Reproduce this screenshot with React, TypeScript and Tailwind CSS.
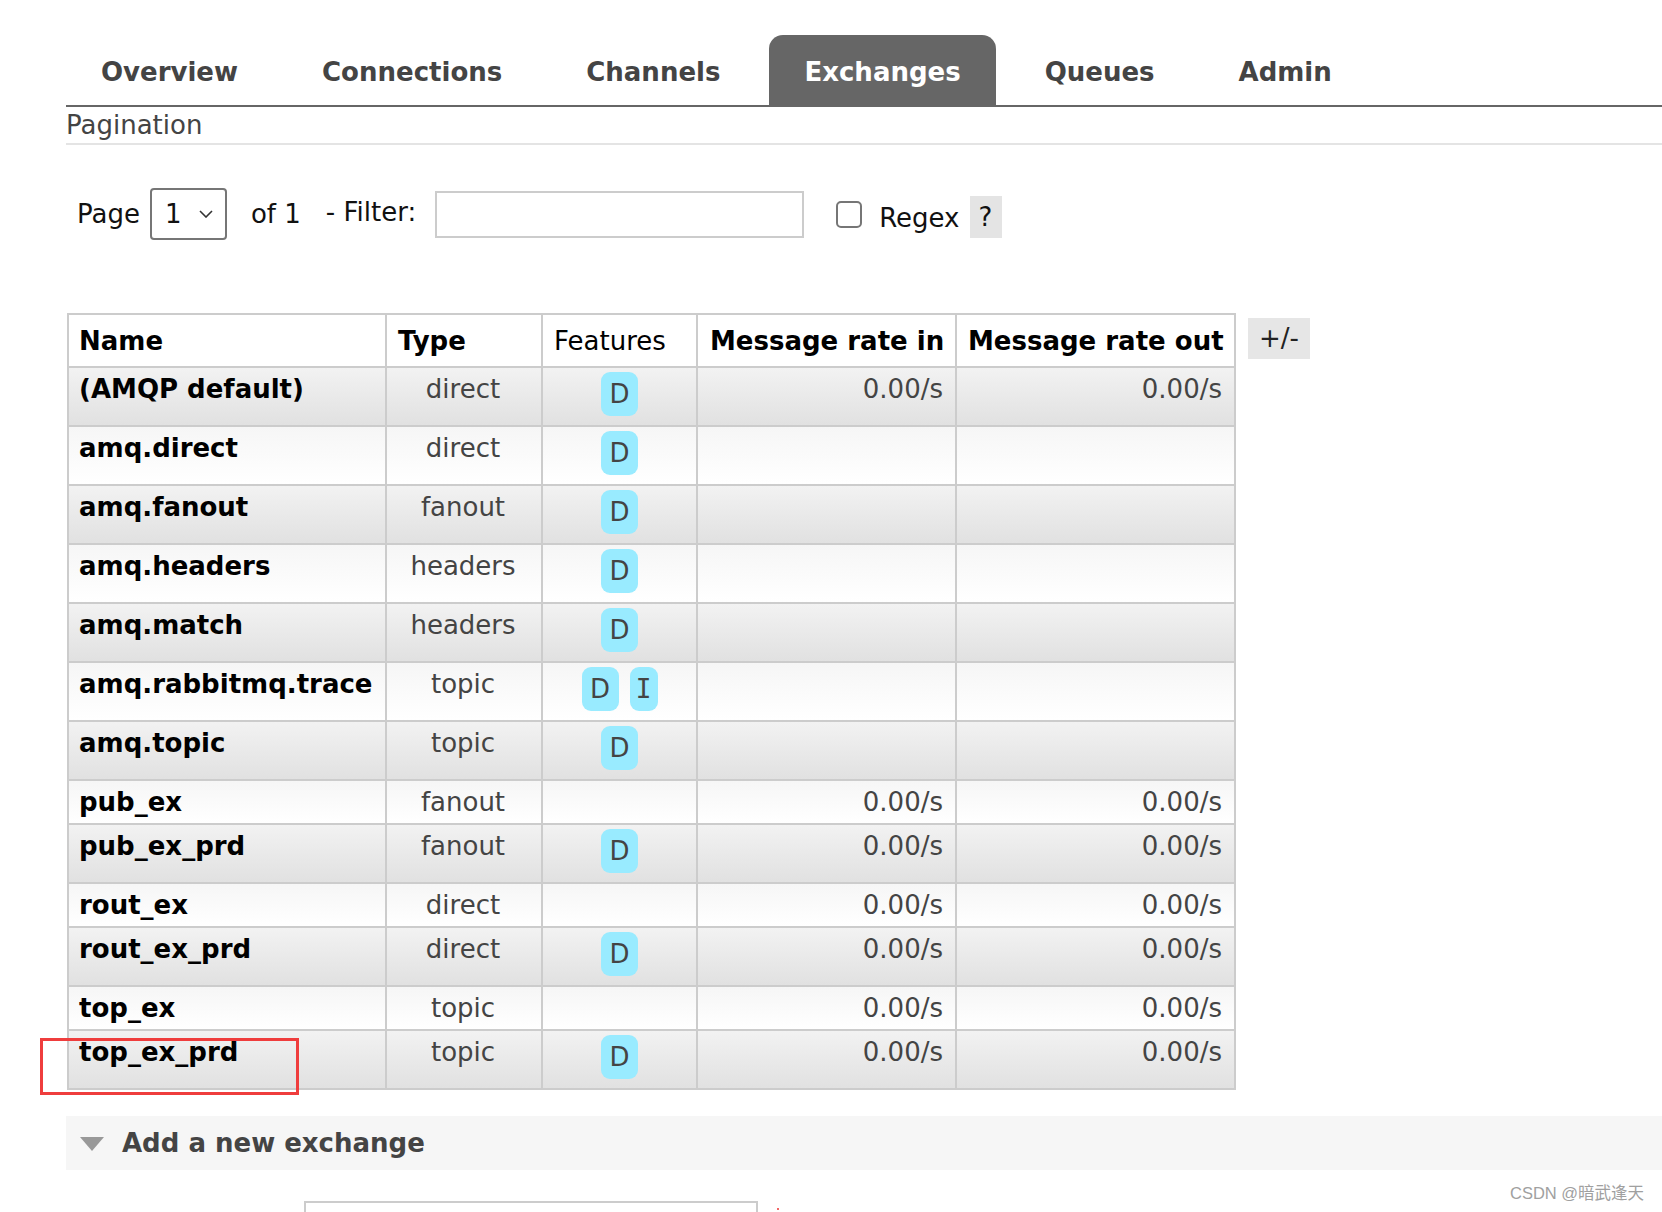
import React from 'react'

const tabs = ['Overview', 'Connections', 'Channels', 'Exchanges', 'Queues', 'Admin']

type Row = { name: string; type: string; features: string[]; rates: boolean }

const rows: Row[] = [
  { name: '(AMQP default)', type: 'direct', features: ['D'], rates: true },
  { name: 'amq.direct', type: 'direct', features: ['D'], rates: false },
  { name: 'amq.fanout', type: 'fanout', features: ['D'], rates: false },
  { name: 'amq.headers', type: 'headers', features: ['D'], rates: false },
  { name: 'amq.match', type: 'headers', features: ['D'], rates: false },
  { name: 'amq.rabbitmq.trace', type: 'topic', features: ['D', 'I'], rates: false },
  { name: 'amq.topic', type: 'topic', features: ['D'], rates: false },
  { name: 'pub_ex', type: 'fanout', features: [], rates: true },
  { name: 'pub_ex_prd', type: 'fanout', features: ['D'], rates: true },
  { name: 'rout_ex', type: 'direct', features: [], rates: true },
  { name: 'rout_ex_prd', type: 'direct', features: ['D'], rates: true },
  { name: 'top_ex', type: 'topic', features: [], rates: true },
  { name: 'top_ex_prd', type: 'topic', features: ['D'], rates: true },
]

const cell = 'border-2 border-[#cccccc] pt-[6px] pb-[6px] leading-[30px] align-top'
const th = 'border-2 border-[#cccccc] pt-[11px] pb-[10px] leading-[30px] text-left align-top text-black'

function Badge({ label }: { label: string }) {
  return (
    <span
      className={`inline-flex h-[44px] items-center justify-center rounded-[9px] bg-[#99ebff] text-[#444] ${
        label === 'I' ? "w-[28px] font-['DejaVu_Sans_Mono',monospace]" : 'w-[37px]'
      }`}
    >
      {label}
    </span>
  )
}

export default function App() {
  return (
    <div className="relative min-h-[1212px] w-full overflow-hidden bg-white font-['DejaVu_Sans',sans-serif] text-[26px] text-[#222]">
      {/* tabs */}
      <div className="ml-[66px] flex gap-[14px] border-b-2 border-[#666] pt-[35px]">
        {tabs.map((t) => (
          <div
            key={t}
            className={`flex h-[70px] items-center rounded-t-[14px] px-[35px] pt-[4px] font-bold ${
              t === 'Exchanges' ? 'bg-[#666] text-white' : 'text-[#444]'
            }`}
          >
            {t}
          </div>
        ))}
      </div>

      <div className="ml-[66px] border-b-2 border-[#e4e4e4] pt-[1px] leading-[35px] text-[#444]">Pagination</div>

      {/* pagination row */}
      <div className="ml-[77px] mt-[43px] flex items-center leading-[30px] text-[#111]">
        <span>Page</span>
        <div className="ml-[10px] flex h-[52px] w-[77px] items-center justify-between rounded-[4px] border-2 border-[#767676] pl-[13px] pr-[12px]">
          <span>1</span>
          <svg width="14" height="8" viewBox="0 0 14 8">
            <polyline points="1,1 7,7 13,1" fill="none" stroke="#333" strokeWidth="1.6" />
          </svg>
        </div>
        <span className="ml-[24px]">of 1</span>
        <span className="ml-[25px] -mt-[4px]">- Filter:</span>
        <div className="ml-[19px] h-[47px] w-[369px] border-2 border-[#cccccc]" />
        <div className="ml-[32px] h-[27px] w-[26px] rounded-[5px] border-2 border-[#767676]" />
        <span className="ml-[17px] mt-[8px]">Regex</span>
        <span className="ml-[10px] mt-[6px] flex h-[42px] w-[32px] items-center justify-center bg-[#e4e4e4]">?</span>
      </div>

      {/* table */}
      <div className="ml-[67px] mt-[73px] flex items-start gap-[12px]">
        <table className="w-[1167px] table-fixed border-collapse border-2 border-[#cccccc]">
          <colgroup>
            <col className="w-[318px]" />
            <col className="w-[156px]" />
            <col className="w-[155px]" />
            <col className="w-[259px]" />
            <col className="w-[279px]" />
          </colgroup>
          <thead>
            <tr className="bg-white">
              <th className={`${th} pl-[10px] font-bold`}>Name</th>
              <th className={`${th} pl-[11px] font-bold`}>Type</th>
              <th className={`${th} pl-[11px] font-normal`}>Features</th>
              <th className={`${th} pl-[12px] font-bold`}>Message rate in</th>
              <th className={`${th} pl-[11px] font-bold`}>Message rate out</th>
            </tr>
          </thead>
          <tbody>
            {rows.map((r, i) => {
              const bg =
                i % 2 === 0
                  ? 'bg-gradient-to-b from-[#f2f2f2] to-[#e1e1e1]'
                  : 'bg-gradient-to-b from-[#f6f6f6] to-[#ffffff]'
              return (
                <tr key={r.name}>
                  <td className={`${cell} ${bg} pl-[10px] font-bold text-black`}>{r.name}</td>
                  <td className={`${cell} ${bg} pr-[2px] text-center text-[#444]`}>{r.type}</td>
                  <td className={`border-2 border-[#cccccc] align-top ${bg} ${r.features.length ? 'pt-[4px] pb-[9px]' : ''}`}>
                    {r.features.length > 0 && (
                      <div className="flex justify-center gap-[11px] leading-[30px]">
                        {r.features.map((f) => (
                          <Badge key={f} label={f} />
                        ))}
                      </div>
                    )}
                  </td>
                  <td className={`${cell} ${bg} pr-[12px] text-right text-[#444]`}>{r.rates ? '0.00/s' : ''}</td>
                  <td className={`${cell} ${bg} pr-[12px] text-right text-[#444]`}>{r.rates ? '0.00/s' : ''}</td>
                </tr>
              )
            })}
          </tbody>
        </table>
        <button className="mt-[5px] flex h-[41px] w-[62px] items-center justify-center bg-[#e6e6e6] text-[#222]">
          +/-
        </button>
      </div>

      {/* add a new exchange */}
      <div className="ml-[66px] mt-[26px] flex h-[54px] items-center bg-[#f6f6f6] pl-[14px]">
        <svg width="24" height="14" viewBox="0 0 24 14" className="mt-[2px]">
          <polygon points="0,0 24,0 12,14" fill="#999" />
        </svg>
        <span className="ml-[18px] font-bold text-[#444]">Add a new exchange</span>
      </div>
      <div className="ml-[304px] mt-[31px] flex items-start">
        <div className="h-[50px] w-[454px] border-2 border-[#cccccc]" />
        <div className="ml-[19px] mt-[7px] h-[2px] w-[2px] rounded-full bg-[#e33]" />
      </div>

      {/* annotation */}
      <div className="absolute left-[40px] top-[1038px] h-[57px] w-[259px] border-[3px] border-[#ef3d3d]" />

      <div className="absolute left-[1510px] top-[1182px] font-['Liberation_Sans','Noto_Sans_CJK_SC',sans-serif] text-[16.5px] leading-[22px] text-[#a0a0a0]">
        CSDN @暗武逢天
      </div>
    </div>
  )
}
